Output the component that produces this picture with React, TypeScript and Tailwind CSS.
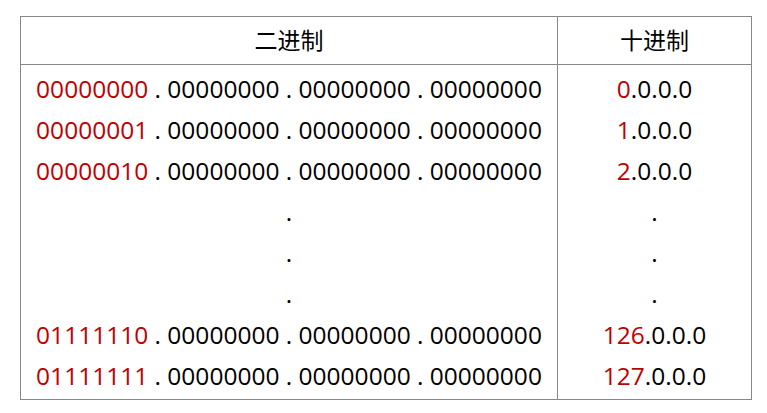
import React from "react";

const RED = "text-[#c00000]";

const rows: ({ bin: string; dec: string } | null)[] = [
  { bin: "00000000", dec: "0" },
  { bin: "00000001", dec: "1" },
  { bin: "00000010", dec: "2" },
  null,
  null,
  null,
  { bin: "01111110", dec: "126" },
  { bin: "01111111", dec: "127" },
];

export default function App() {
  return (
    <div
      className="w-[767px] h-[413px] bg-white pt-[16px] pl-[20px]"
      style={{ fontFamily: '"Open Sans", "Noto Sans CJK SC", sans-serif' }}
    >
      <div className="w-[732px] border border-[#888888] text-black">
        <div className="flex h-[48px] border-b border-[#888888]">
          <div className="w-[537px] border-r border-[#888888] flex items-center justify-center text-[23px]">
            二进制
          </div>
          <div className="flex-1 flex items-center justify-center text-[23px]">
            十进制
          </div>
        </div>
        <div className="flex py-[3px] text-[24.5px]">
          <div className="w-[537px] border-r border-[#888888] -my-[3px] py-[3px]">
            {rows.map((r, i) => (
              <div key={i} className="h-[41px] leading-[41px] text-center whitespace-pre">
                {r ? (
                  <>
                    <span className={RED}>{r.bin}</span>
                    {" . 00000000 . 00000000 . 00000000"}
                  </>
                ) : (
                  "."
                )}
              </div>
            ))}
          </div>
          <div className="flex-1">
            {rows.map((r, i) => (
              <div key={i} className="h-[41px] leading-[41px] text-center">
                {r ? (
                  <>
                    <span className={RED}>{r.dec}</span>
                    .0.0.0
                  </>
                ) : (
                  "."
                )}
              </div>
            ))}
          </div>
        </div>
      </div>
    </div>
  );
}
